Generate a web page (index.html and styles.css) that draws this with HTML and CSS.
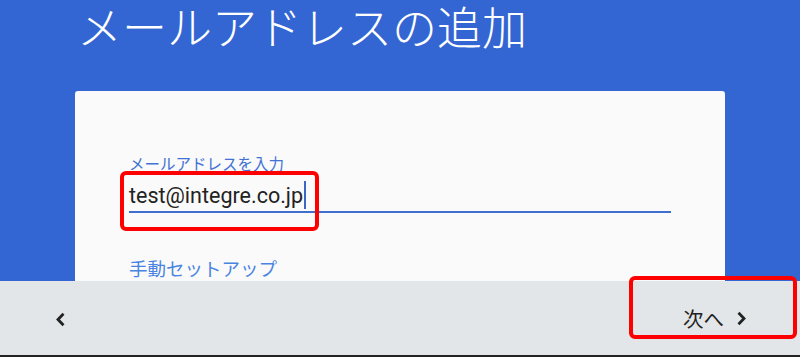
FILE: index.html
```html
<!DOCTYPE html>
<html lang="ja">
  <head>
    <meta charset="UTF-8" />
    <meta name="viewport" content="width=device-width, initial-scale=1.0" />
    <title>メールアドレスの追加</title>
    <link rel="stylesheet" href="styles.css">
  </head>
  <body>
    <div class="screen">
      <h1 class="title">メールアドレスの追加</h1>
      <div class="card">
        <div class="field">
          <label class="field-label" for="email">メールアドレスを入力</label>
          <div class="field-input">
            <span class="field-value" id="email">test@integre.co.jp</span><span class="caret"></span>
            <span class="mark mark-input"></span>
          </div>
        </div>
        <a class="manual-link" href="#">手動セットアップ</a>
      </div>
    </div>
    <div class="bottom-bar">
      <button class="nav-btn back" type="button">
        <svg width="11" height="15" viewBox="0 0 11 15"><path d="M8.5 1.8 L3 7.5 L8.5 13.2" fill="none" stroke="#222" stroke-width="2.8"/></svg>
      </button>
      <button class="nav-btn next" type="button">
        <span>次へ</span>
        <svg width="11" height="15" viewBox="0 0 11 15"><path d="M2.5 1.8 L8 7.5 L2.5 13.2" fill="none" stroke="#222" stroke-width="2.8"/></svg>
        <span class="mark mark-next"></span>
      </button>
    </div>
  </body>
</html>
```

FILE: styles.css
```css
body {
  margin: 0;
  padding: 0;
  width: 800px;
  height: 357px;
  overflow: hidden;
  display: flex;
  flex-direction: column;
  background-color: #3366d2;
  font-family: Roboto, "Noto Sans CJK JP", sans-serif;
}
.screen {
  flex: 1;
  display: flex;
  flex-direction: column;
  overflow: hidden;
  padding: 0 75px;
}
.title {
  margin: 0 0 0 2px;
  height: 91px;
  font-family: "Noto Sans CJK JP", sans-serif;
  font-weight: 300;
  font-size: 45px;
  line-height: 52px;
  color: #ffffff;
}
.card {
  flex: 1;
  background-color: #fafafa;
  border-radius: 3px 3px 0 0;
  padding: 62px 54px 0 54px;
}
.field-label {
  display: block;
  font-family: "Noto Sans CJK JP", sans-serif;
  font-size: 15.5px;
  line-height: 20px;
  color: #4172d4;
}
.field-input {
  position: relative;
  display: flex;
  align-items: center;
  height: 38px;
  border-bottom: 2px solid #3f6fcd;
}
.field-value {
  font-size: 21.5px;
  color: #222222;
  padding-top: 6px;
}
.caret {
  width: 2px;
  height: 28px;
  margin-left: 1px;
  margin-top: 6px;
  background-color: #3a66c8;
}
.mark {
  position: absolute;
  border: 4px solid #ff0000;
  border-radius: 6px;
  box-sizing: border-box;
  pointer-events: none;
}
.mark-input {
  left: -9px;
  top: -2px;
  width: 199px;
  height: 60px;
}
.manual-link {
  display: inline-block;
  margin-top: 42px;
  font-family: "Noto Sans CJK JP", sans-serif;
  font-size: 18.5px;
  color: #4a84e2;
  text-decoration: none;
}
.bottom-bar {
  height: 74px;
  flex-shrink: 0;
  display: flex;
  justify-content: space-between;
  align-items: center;
  background-color: #e3e6e8;
  border-bottom: 2px solid #222222;
}
.nav-btn {
  background: transparent;
  border: none;
  display: flex;
  align-items: center;
  cursor: pointer;
  color: #222222;
  font-family: "Noto Sans CJK JP", sans-serif;
  font-size: 20.5px;
}
.back {
  margin-left: 49px;
  padding: 4px 6px;
  margin-top: 2px;
}
.next {
  position: relative;
  margin-right: 53px;
  gap: 12px;
  padding: 0;
}
.mark-next {
  left: -54px;
  top: -27px;
  width: 168px;
  height: 63px;
}
```
